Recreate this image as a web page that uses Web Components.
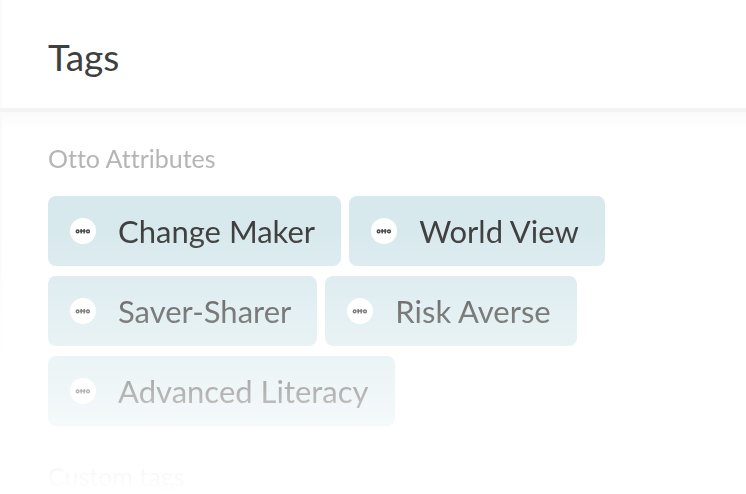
<!DOCTYPE html>
<html lang="en">
<head>
<meta charset="utf-8">
<title>Tags</title>
<style>
    body {
        margin: 0;
        background: #fff;
        font-family: Lato, "Liberation Sans", sans-serif;
        font-variant-ligatures: none;
        color: #3f3f3f;
    }
</style>
</head>
<body>
<tags-panel heading="Tags">
    <tag-group label="Otto Attributes">
        <otto-tag>Change Maker</otto-tag>
        <otto-tag>World View</otto-tag>
        <otto-tag>Saver-Sharer</otto-tag>
        <otto-tag>Risk Averse</otto-tag>
        <otto-tag>Advanced Literacy</otto-tag>
    </tag-group>
    <tag-group label="Custom tags"></tag-group>
</tags-panel>

<script>
class OttoLogo extends HTMLElement {
    constructor() {
        super();
        this.attachShadow({ mode: 'open' });
    }

    connectedCallback() {
        this.shadowRoot.innerHTML = `
            <style>
                :host {
                    display: block;
                    width: 26px;
                    height: 26px;
                    flex: none;
                }
                svg {
                    display: block;
                }
            </style>
            <svg width="26" height="26" viewBox="0 0 26 26" aria-hidden="true">
                <circle cx="13" cy="13" r="13" fill="#fff"/>
                <g fill="none" stroke="#4a4a4a" stroke-width="1.5">
                    <circle cx="7.6" cy="13.4" r="1.3"/>
                    <path d="M11.2 11v4.6M14.2 11v4.6M9.8 12.9h5.8"/>
                    <circle cx="18" cy="13.4" r="1.4"/>
                </g>
            </svg>
        `;
    }
}

class OttoTag extends HTMLElement {
    constructor() {
        super();
        this.attachShadow({ mode: 'open' });
    }

    connectedCallback() {
        this.setAttribute('role', 'listitem');
        this.shadowRoot.innerHTML = `
            <style>
                :host {
                    display: flex;
                    align-items: center;
                    gap: 22px;
                    box-sizing: border-box;
                    height: 70px;
                    padding: 0 26px 0 22px;
                    border-radius: 8px;
                    background: #d8e9ed;
                    font-size: 31px;
                    line-height: 40px;
                    white-space: nowrap;
                }
            </style>
            <otto-logo></otto-logo>
            <span><slot></slot></span>
        `;
    }
}

class TagGroup extends HTMLElement {
    constructor() {
        super();
        this.attachShadow({ mode: 'open' });
    }

    connectedCallback() {
        this.shadowRoot.innerHTML = `
            <style>
                :host {
                    display: block;
                }
                h2 {
                    margin: 0 0 22px;
                    color: #b5b5b5;
                    font-size: 25px;
                    font-weight: 400;
                    line-height: 32px;
                }
                .tags {
                    display: flex;
                    flex-wrap: wrap;
                    gap: 10px 8px;
                }
            </style>
            <h2 id="label"></h2>
            <div class="tags" role="list" aria-labelledby="label"><slot></slot></div>
        `;
        this.shadowRoot.querySelector('h2').textContent = this.getAttribute('label');
    }
}

class TagsPanel extends HTMLElement {
    constructor() {
        super();
        this.attachShadow({ mode: 'open' });
    }

    connectedCallback() {
        this.shadowRoot.innerHTML = `
            <style>
                :host {
                    display: block;
                    background: linear-gradient(#fafafa, #fafafa 200px, #fff 370px) left / 2px 100% no-repeat;
                }
                header {
                    padding: 33px 48px 27px;
                    border-bottom: 4px solid #f4f4f4;
                }
                h1 {
                    margin: 0;
                    font-size: 37px;
                    font-weight: 400;
                    line-height: 48px;
                }
                .content {
                    display: flex;
                    flex-direction: column;
                    gap: 34px;
                    padding: 30px 48px 0;
                    background: linear-gradient(#fafafa, transparent 16px);
                    /* the list fades out towards the bottom */
                    mask-image: linear-gradient(#000 120px, transparent 384px);
                }
            </style>
            <header><h1></h1></header>
            <div class="content"><slot></slot></div>
        `;
        this.shadowRoot.querySelector('h1').textContent = this.getAttribute('heading');
    }
}

customElements.define('otto-logo', OttoLogo);
customElements.define('otto-tag', OttoTag);
customElements.define('tag-group', TagGroup);
customElements.define('tags-panel', TagsPanel);
</script>
</body>
</html>
